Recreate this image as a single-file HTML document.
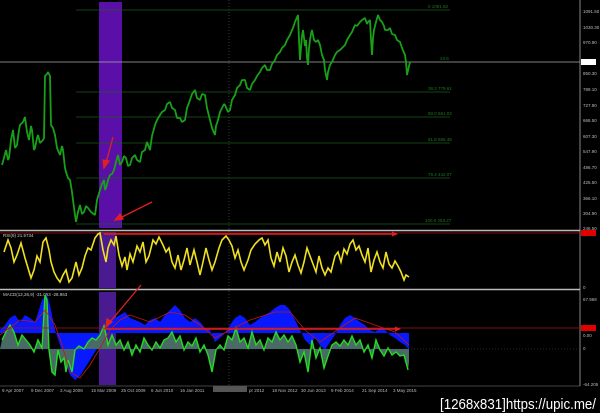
<!DOCTYPE html>
<html><head><meta charset="utf-8"><style>
html,body{margin:0;padding:0;background:#000;width:600px;height:413px;overflow:hidden}
svg{display:block}
text{font-family:"Liberation Sans",sans-serif}
</style></head><body>
<svg width="600" height="413" viewBox="0 0 600 413" xmlns="http://www.w3.org/2000/svg">
<rect width="600" height="413" fill="#000"/>
<rect x="99" y="2" width="23" height="226" fill="#5a10a8"/>
<rect x="99" y="232" width="17" height="56" fill="#4a1a90"/>
<rect x="99" y="292" width="17" height="93" fill="#4a1a90"/>
<line x1="229" y1="0" x2="229" y2="385" stroke="#666" stroke-dasharray="1,2" stroke-width="0.6"/>
<g stroke="#1d5a1d" stroke-width="0.8">
<line x1="76" y1="10" x2="450" y2="10"/><line x1="76" y1="92" x2="450" y2="92"/>
<line x1="76" y1="117" x2="450" y2="117"/><line x1="76" y1="143" x2="450" y2="143"/>
<line x1="76" y1="178" x2="450" y2="178"/><line x1="76" y1="224" x2="450" y2="224"/>
</g>
<g fill="#1e7a1e" font-size="4.5">
<text x="428" y="8">0 1091.50</text><text x="440" y="60">23.6</text>
<text x="428" y="90">38.2 779.61</text><text x="428" y="115">50.0 661.02</text>
<text x="428" y="141">61.8 555.48</text><text x="428" y="176">76.4 442.07</text>
<text x="425" y="222">100.0 253.27</text></g>
<line x1="0" y1="62" x2="580" y2="62" stroke="#aaa" stroke-width="0.8"/>
<polyline fill="none" stroke="#18a018" stroke-width="1.8" stroke-linejoin="bevel" points="2,165 4,158 6,150 8,160 9,158 11,140 13,130 15,148 17,145 19,130 20,125 23,122 25,117 27,132 29,140 31,126 32,130 34,150 35,148 37,138 38,135 40,143 41,142 43,140 44,138 45,76 47,74 48,72 50,76 51,125 53,128 55,135 57,148 60,155 62,146 63,150 65,168 66,172 68,178 70,180 72,192 73,200 75,215 76,222 78,212 80,205 82,214 84,212 86,206 88,208 91,212 95,215 97,200 100,190 102,184 104,180 105,190 106,188 108,180 110,175 112,174 114,170 116,162 118,155 120,165 122,162 124,156 126,158 128,166 130,165 132,158 135,155 137,160 140,162 142,152 145,150 147,142 150,150 152,136 155,125 157,120 160,115 162,112 165,110 167,104 170,102 172,108 175,110 177,118 180,118 182,122 185,120 187,108 190,100 192,94 195,90 197,98 200,100 202,94 205,95 207,108 210,120 212,128 215,135 216,126 218,120 220,112 222,108 224,104 225,105 228,112 230,110 232,100 235,95 237,88 240,85 242,80 245,80 247,88 250,90 252,84 255,80 257,76 260,72 262,68 265,65 267,70 270,70 272,64 275,60 277,55 280,52 282,48 285,45 287,40 290,35 292,30 293,28 295,22 298,15 299,40 300,60 302,36 303,30 305,46 306,40 307,58 308,65 309,48 310,40 311,34 312,30 314,40 316,42 318,40 320,45 322,55 324,60 325,70 327,80 328,72 330,65 332,62 335,55 337,52 340,50 342,48 345,45 347,40 350,35 352,32 355,25 357,26 360,22 362,20 365,18 367,24 368,22 370,20 371,40 372,55 373,38 374,30 376,22 378,15 380,20 382,22 384,26 385,30 388,30 390,28 392,34 395,35 397,40 400,42 402,48 405,55 406,62 407,75 409,66 410,62"/>
<g stroke="#e02020" stroke-width="1.3" fill="#e02020">
<line x1="113" y1="137" x2="106" y2="163"/><polygon points="104,168 103,160 109,161"/>
<line x1="152" y1="202" x2="120" y2="218"/><polygon points="115,220 120,214 123,219"/>
</g>
<line x1="580" y1="0" x2="580" y2="386" stroke="#aaa" stroke-width="0.8"/>
<g fill="#bbb" font-size="4.5">
<text x="583" y="13">1091.50</text><text x="583" y="29">1030.30</text><text x="583" y="44">970.90</text>
<text x="583" y="75">850.30</text><text x="583" y="91">789.10</text><text x="583" y="107">727.90</text>
<text x="583" y="122">668.50</text><text x="583" y="138">607.30</text><text x="583" y="153">547.90</text>
<text x="583" y="169">486.70</text><text x="583" y="184">425.50</text><text x="583" y="200">366.10</text>
<text x="583" y="215">304.90</text><text x="583" y="230">246.50</text>
<text x="583" y="289">0</text><text x="583" y="301">67.969</text><text x="583" y="337">0.00</text>
<text x="583" y="350">0</text><text x="583" y="386">-64.205</text>
</g>
<rect x="581" y="59" width="15" height="6" fill="#fff"/>
<line x1="0" y1="230.5" x2="580" y2="230.5" stroke="#bbb" stroke-width="1.6"/>
<line x1="0" y1="289.5" x2="580" y2="289.5" stroke="#bbb" stroke-width="1.6"/>
<line x1="0" y1="386" x2="580" y2="386" stroke="#888" stroke-width="0.6"/>
<line x1="0" y1="233" x2="580" y2="233" stroke="#b01010" stroke-width="0.8"/>
<rect x="581" y="230" width="15" height="6" fill="#e00000"/>
<rect x="581" y="325" width="15" height="6" fill="#e00000"/>
<text x="3" y="237" fill="#ccc" font-size="4.5">RSI(9) 21.5734</text>
<polyline fill="none" stroke="#f0e020" stroke-width="1.6" points="4,252 8,240 11,248 14,262 17,255 21,243 25,258 28,268 31,278 34,270 37,256 40,262 43,242 46,238 49,250 51,262 54,272 57,278 60,282 63,275 66,270 69,282 72,278 76,262 79,275 82,268 85,256 88,248 91,250 95,238 98,234 100,233 103,250 106,262 108,248 111,240 114,245 116,236 119,255 122,266 125,257 127,270 130,254 133,262 137,246 140,252 143,242 146,262 149,256 153,240 156,244 159,237 163,245 166,252 169,248 172,262 175,268 178,255 181,270 184,260 187,248 190,265 194,250 197,262 200,275 203,262 206,248 209,260 212,270 215,262 219,248 222,240 226,236 229,240 232,246 235,258 238,250 241,262 244,270 248,260 251,250 255,244 259,240 262,238 265,245 268,240 271,258 274,266 277,252 280,262 283,248 286,256 289,272 292,262 295,255 298,265 301,273 304,262 307,248 310,256 313,264 316,272 319,256 322,268 325,275 328,268 331,272 335,256 338,252 341,262 344,249 347,254 350,244 353,240 356,250 359,246 362,255 365,262 368,248 371,272 374,260 377,252 380,262 383,268 386,252 389,264 392,268 395,261 398,266 401,272 404,280 406,275 409,277"/>
<line x1="104" y1="234" x2="395" y2="234" stroke="#e02020" stroke-width="1.6"/>
<polygon points="398,234 392,231.5 392,236.5" fill="#e02020"/>
<text x="3" y="296" fill="#ccc" font-size="4.5">MACD(12,26,9) -31.053 -28.963</text>
<path fill="#0818ff" d="M0,333 L0,330 5,325 10,318 15,315 20,322 25,315 30,318 35,322 42,300 47,295 50,305 55,330 60,345 65,362 70,375 75,380 80,376 85,368 90,360 95,352 100,345 105,335 110,323 115,318 120,315 125,312 130,318 135,320 140,322 145,325 150,320 155,318 160,322 165,315 170,310 175,305 180,310 185,318 190,322 195,318 200,322 205,328 210,330 215,342 220,338 225,333 230,325 235,318 240,315 245,318 250,325 255,322 260,318 265,315 270,312 275,308 280,305 285,305 290,310 295,320 300,330 305,340 310,345 315,338 320,345 325,350 330,342 335,335 340,325 345,318 350,315 355,318 360,322 365,325 370,330 375,332 380,328 385,330 390,335 395,338 400,342 405,345 409,350 409,333 Z"/>
<path fill="#4a6a66" d="M0,349 L2,340 6,332 10,325 14,332 18,345 22,335 26,340 30,345 34,352 38,340 42,348 45,295 47,300 49,350 52,372 55,375 58,350 61,362 64,358 66,372 68,360 72,372 75,350 79,346 84,349 88,342 92,338 96,340 100,335 104,326 106,335 108,345 112,335 116,345 120,340 124,350 128,342 132,355 136,345 140,352 144,338 148,345 152,350 156,342 160,348 164,340 168,338 172,332 176,342 180,336 184,350 188,342 192,346 196,338 200,352 204,345 208,355 212,372 216,350 220,345 224,350 228,336 232,340 236,328 240,342 244,338 248,348 252,332 256,345 260,340 264,350 268,338 272,342 276,332 280,340 284,335 288,342 292,336 296,345 300,362 304,352 308,372 312,340 316,358 320,348 324,368 328,356 332,345 336,342 340,346 344,340 348,345 352,336 356,345 360,340 364,352 368,345 372,358 376,340 380,350 384,356 388,348 392,355 396,352 400,356 404,355 408,370 409,362 409,349 Z"/>
<polyline fill="none" stroke="#22dd22" stroke-width="1.4" points="2,340 6,332 10,325 14,332 18,345 22,335 26,340 30,345 34,352 38,340 42,348 45,295 47,300 49,350 52,372 55,375 58,350 61,362 64,358 66,372 68,360 72,372 75,350 79,346 84,349 88,342 92,338 96,340 100,335 104,326 106,335 108,345 112,335 116,345 120,340 124,350 128,342 132,355 136,345 140,352 144,338 148,345 152,350 156,342 160,348 164,340 168,338 172,332 176,342 180,336 184,350 188,342 192,346 196,338 200,352 204,345 208,355 212,372 216,350 220,345 224,350 228,336 232,340 236,328 240,342 244,338 248,348 252,332 256,345 260,340 264,350 268,338 272,342 276,332 280,340 284,335 288,342 292,336 296,345 300,362 304,352 308,372 312,340 316,358 320,348 324,368 328,356 332,345 336,342 340,346 344,340 348,345 352,336 356,345 360,340 364,352 368,345 372,358 376,340 380,350 384,356 388,348 392,355 396,352 400,356 404,355 408,370"/>
<polyline fill="none" stroke="#c01818" stroke-width="0.8" points="0,335 20,320 35,322 45,310 55,325 62,345 70,372 80,378 90,365 100,348 110,330 120,320 130,315 150,322 170,312 185,315 200,325 215,338 230,330 250,320 275,312 290,312 305,330 320,342 340,328 355,318 375,325 395,332 409,345"/>
<line x1="0" y1="328" x2="580" y2="328" stroke="#b01010" stroke-width="0.8"/>
<line x1="104" y1="329" x2="398" y2="329" stroke="#e02020" stroke-width="1.6"/>
<polygon points="401,329 395,326.5 395,331.5" fill="#e02020"/>
<line x1="0" y1="349" x2="580" y2="349" stroke="#456" stroke-dasharray="1,2" stroke-width="0.6"/>
<g stroke="#e02020" stroke-width="1.3" fill="#e02020">
<line x1="141" y1="285" x2="110" y2="322"/><polygon points="106,327 107,319 112,322"/>
</g>
<rect x="213" y="386" width="34" height="6" fill="#555"/>
<g fill="#bbb" font-size="4.5">
<text x="2" y="392">9 Apr 2007</text><text x="31" y="392">9 Dec 2007</text><text x="60" y="392">3 Aug 2008</text>
<text x="91" y="392">15 Mar 2009</text><text x="121" y="392">25 Oct 2009</text><text x="151" y="392">6 Jun 2010</text>
<text x="180" y="392">16 Jan 2011</text><text x="249" y="392">pr 2012</text><text x="272" y="392">18 Nov 2012</text>
<text x="301" y="392">30 Jun 2013</text><text x="331" y="392">9 Feb 2014</text><text x="362" y="392">21 Sep 2014</text>
<text x="393" y="392">3 May 2015</text></g>
<text x="440" y="409" fill="#fff" font-size="15" font-family="Liberation Mono, monospace" textLength="156" lengthAdjust="spacingAndGlyphs">[1268x831]https://upic.me/</text>
</svg>
</body></html>
